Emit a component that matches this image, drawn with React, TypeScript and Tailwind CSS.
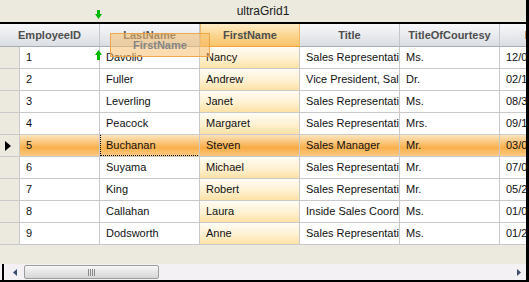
import React from "react";

type Row = { id: string; last: string; first: string; title: string; toc: string; birth: string };

const rows: Row[] = [
  { id: "1", last: "Davolio", first: "Nancy", title: "Sales Representative", toc: "Ms.", birth: "12/08/1948" },
  { id: "2", last: "Fuller", first: "Andrew", title: "Vice President, Sales", toc: "Dr.", birth: "02/19/1952" },
  { id: "3", last: "Leverling", first: "Janet", title: "Sales Representative", toc: "Ms.", birth: "08/30/1963" },
  { id: "4", last: "Peacock", first: "Margaret", title: "Sales Representative", toc: "Mrs.", birth: "09/19/1937" },
  { id: "5", last: "Buchanan", first: "Steven", title: "Sales Manager", toc: "Mr.", birth: "03/04/1955" },
  { id: "6", last: "Suyama", first: "Michael", title: "Sales Representative", toc: "Mr.", birth: "07/02/1963" },
  { id: "7", last: "King", first: "Robert", title: "Sales Representative", toc: "Mr.", birth: "05/29/1960" },
  { id: "8", last: "Callahan", first: "Laura", title: "Inside Sales Coordinator", toc: "Ms.", birth: "01/09/1958" },
  { id: "9", last: "Dodsworth", first: "Anne", title: "Sales Representative", toc: "Ms.", birth: "01/27/1966" },
];

const cell =
  "h-[22px] border-b border-r border-[#c9c9c9] pl-[6px] flex items-center whitespace-nowrap overflow-hidden text-[#111]";

const hdr =
  "h-[23px] border-b border-r border-b-[#a9adb3] border-r-[#c3c6cb] flex items-center justify-center whitespace-nowrap overflow-hidden font-bold text-[#4e4e4e] bg-[linear-gradient(to_bottom,#f7f8fa,#e9ebee_50%,#d9dde2)]";

function GridRow({ r, active }: { r: Row; active: boolean }) {
  const sel = active ? "bg-[linear-gradient(to_bottom,#fde5bf,#f9b04c_60%,#fbca82)]" : "bg-white";
  const firstBg = active
    ? "bg-[linear-gradient(to_bottom,#fde3bb,#f8ab45_60%,#fbc67c)]"
    : "bg-[linear-gradient(to_bottom,#fffcf4,#fff1d2_55%,#fde2a6)]";
  return (
    <div className="grid grid-cols-[20px_80px_100px_100px_100px_100px_100px]">
      <div className="h-[22px] border-b border-r border-[#c9c9c9] bg-[#ece9de] flex items-center pl-[5px]">
        {active && (
          <svg width="6" height="10" viewBox="0 0 6 10">
            <path d="M0 0 L6 5 L0 10 Z" fill="#000" />
          </svg>
        )}
      </div>
      <div className={`${cell} ${sel}`}>{r.id}</div>
      <div className={`${cell} ${sel} relative`}>
        {r.last}
        {active && <div className="absolute left-0 right-[-1px] top-[-1px] bottom-0 border border-dotted border-black" />}
      </div>
      <div className={`${cell} ${firstBg}`}>{r.first}</div>
      <div className={`${cell} ${sel}`}>{r.title}</div>
      <div className={`${cell} ${sel}`}>{r.toc}</div>
      <div className={`${cell} ${sel}`}>{r.birth}</div>
    </div>
  );
}

export default function App() {
  return (
    <div
      className="relative w-[529px] h-[282px] overflow-hidden bg-[#ece9de] flex text-[11px]"
      style={{ fontFamily: '"Liberation Sans", Arial, sans-serif' }}
    >
      <div className="w-[526px] h-full flex flex-col overflow-hidden">
        <div className="h-[22px] shrink-0 flex items-center justify-center text-[12px] text-[#1a1a1a] bg-[#ece9de]">
          ultraGrid1
        </div>
        <div className="h-[2px] shrink-0 bg-black" />
        <div className="w-[620px] flex flex-col">
          <div className="grid grid-cols-[100px_100px_100px_100px_100px_100px]">
            <div className={hdr}>EmployeeID</div>
            <div className={hdr}>LastName</div>
            <div className="h-[23px] border-b border-r border-b-[#f2a33a] border-r-[#f0b868] border-l border-l-[#f0b868] flex items-center justify-center font-bold text-[#4e4e4e] bg-[linear-gradient(to_bottom,#fdebc6,#fbd48d_55%,#f8c46a)]">
              FirstName
            </div>
            <div className={hdr}>Title</div>
            <div className={hdr}>TitleOfCourtesy</div>
            <div className={hdr}>BirthDate</div>
          </div>
          {rows.map((r) => (
            <GridRow key={r.id} r={r} active={r.id === "5"} />
          ))}
        </div>
        <div className="flex-1 bg-[#ece9de]" />
        <div className="h-[16px] shrink-0 flex bg-[#f3f1f4]">
          <div className="w-[2px] shrink-0" />
          <div className="w-[2px] shrink-0 bg-black" />
          <div className="flex-1 relative flex items-center">
            <svg className="ml-[9px]" width="4" height="7" viewBox="0 0 4 7">
              <path d="M4 0 L0 3.5 L4 7 Z" fill="#3d4d6e" />
            </svg>
            <div className="ml-[7px] w-[135px] h-[14px] rounded-[2px] border border-[#9d9d9d] bg-[linear-gradient(to_bottom,#f8f8f8,#e6e6e6_50%,#d6d6d6)] flex items-center justify-center gap-[1px]">
              <div className="w-[1px] h-[7px] bg-[#8a8a8a]" />
              <div className="w-[1px] h-[7px] bg-[#8a8a8a]" />
              <div className="w-[1px] h-[7px] bg-[#8a8a8a]" />
              <div className="w-[1px] h-[7px] bg-[#8a8a8a]" />
            </div>
            <div className="flex-1" />
            <svg className="mr-[5px]" width="4" height="7" viewBox="0 0 4 7">
              <path d="M0 0 L4 3.5 L0 7 Z" fill="#3d4d6e" />
            </svg>
          </div>
        </div>
        <div className="h-[2px] shrink-0 bg-black" />
      </div>
      <div className="w-[3px] h-full bg-black" />

      {/* drag indicator */}
      <div className="absolute left-[110px] top-[33px] w-[100px] h-[24px] border border-[rgba(240,160,60,0.85)] bg-[rgba(248,192,112,0.55)] flex items-center justify-center pt-[0px] font-bold text-[#858585]">
        FirstName
      </div>
      {/* drop arrows */}
      <svg className="absolute left-[95px] top-[10px]" width="7" height="9" viewBox="0 0 7 9">
        <path d="M2 0 H5 V4 H7 L3.5 9 L0 4 H2 Z" fill="#00b800" />
      </svg>
      <svg className="absolute left-[95px] top-[50px]" width="7" height="10" viewBox="0 0 7 10">
        <path d="M3.5 0 L7 5 H5 V10 H2 V5 H0 Z" fill="#00b800" />
      </svg>
    </div>
  );
}
